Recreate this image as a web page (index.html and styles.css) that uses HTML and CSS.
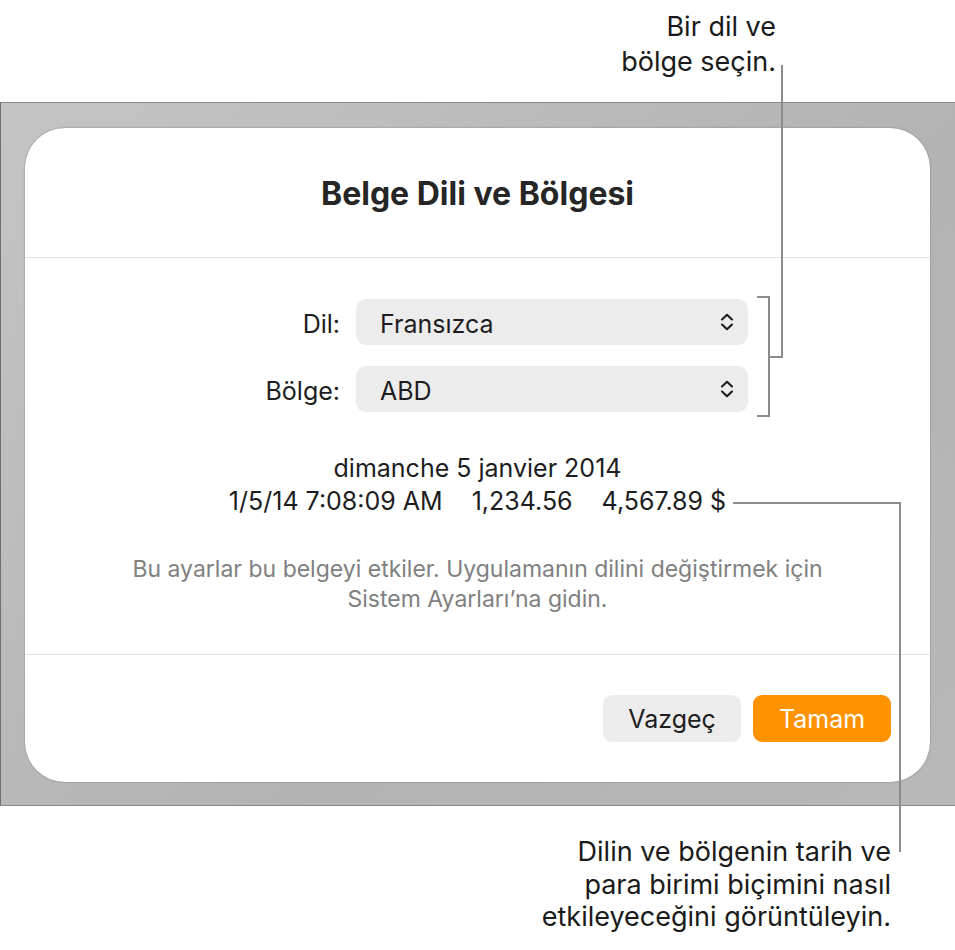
FILE: index.html
```html
<!DOCTYPE html>
<html lang="tr">
<head>
  <meta charset="UTF-8">
  <meta name="viewport" content="width=device-width, initial-scale=1">
  <title>Belge Dili ve Bölgesi</title>
  <link rel="stylesheet" href="styles.css">
</head>
<body>
  <div class="page">
    <p class="callout callout-top">Bir dil ve<br>bölge seçin.</p>

    <div class="frame">
      <div class="dialog">
        <h1 class="dialog-title">Belge Dili ve Bölgesi</h1>

        <div class="fields">
          <div class="field-row">
            <label class="field-label">Dil:</label>
            <div class="popup">
              <span>Fransızca</span>
              <svg class="chevrons" width="14" height="18" viewBox="0 0 14 18">
                <path d="M2 6.5 L7 1.8 L12 6.5 M2 11.5 L7 16.2 L12 11.5" fill="none" stroke="#1d1d1f" stroke-width="2.1" stroke-linecap="round" stroke-linejoin="round"/>
              </svg>
            </div>
          </div>
          <div class="field-row">
            <label class="field-label">Bölge:</label>
            <div class="popup">
              <span>ABD</span>
              <svg class="chevrons" width="14" height="18" viewBox="0 0 14 18">
                <path d="M2 6.5 L7 1.8 L12 6.5 M2 11.5 L7 16.2 L12 11.5" fill="none" stroke="#1d1d1f" stroke-width="2.1" stroke-linecap="round" stroke-linejoin="round"/>
              </svg>
            </div>
          </div>
        </div>

        <div class="sample">
          <div>dimanche 5 janvier 2014</div>
          <div class="sample-row">
            <span>1/5/14 7:08:09 AM</span>
            <span>1,234.56</span>
            <span>4,567.89 $</span>
          </div>
        </div>

        <p class="note">Bu ayarlar bu belgeyi etkiler. Uygulamanın dilini değiştirmek için<br>Sistem Ayarları’na gidin.</p>

        <div class="actions">
          <button class="btn btn-cancel">Vazgeç</button>
          <button class="btn btn-ok">Tamam</button>
        </div>
      </div>
    </div>

    <p class="callout callout-bottom">Dilin ve bölgenin tarih ve<br>para birimi biçimini nasıl<br>etkileyeceğini görüntüleyin.</p>

    <!-- leader lines -->
    <div class="line" style="left:781px; top:65px; width:2px; height:293px"></div>
    <div class="line" style="left:768px; top:356px; width:15px; height:2px"></div>
    <div class="line" style="left:768px; top:296px; width:2px; height:121px"></div>
    <div class="line" style="left:757px; top:296px; width:13px; height:2px"></div>
    <div class="line" style="left:757px; top:415px; width:13px; height:2px"></div>
    <div class="line" style="left:733px; top:502px; width:168px; height:2px"></div>
    <div class="line" style="left:899px; top:502px; width:2px; height:350px"></div>
  </div>
</body>
</html>
```

FILE: styles.css
```css
body {
  margin: 0;
  background: #fff;
  color: #1d1d1f;
  font-family: Inter, "Noto Sans", sans-serif;
}
.page {
  position: relative;
  width: 955px;
  height: 950px;
}

/* Callout text */
.callout {
  margin: 0;
  font-size: 27px;
  line-height: 35px;
  text-align: right;
  color: #1a1a1a;
}
.callout-top {
  height: 102px;
  box-sizing: border-box;
  padding: 9px 179px 0 0;
}
.callout-bottom {
  padding: 30px 64px 0 0;
  line-height: 32.5px;
}
.line {
  position: absolute;
  background: #8c8c8c;
}

/* Grey window backdrop */
.frame {
  height: 704px;
  box-sizing: border-box;
  padding: 25px 24px 0 24px;
  border: 1px solid #8a8a8a;
  border-left-color: #6f6f6f;
  border-right: none;
  background: linear-gradient(135deg, #c4c4c4 0%, #b3b3b3 60%, #b8b8b8 100%);
}

/* Dialog */
.dialog {
  width: 905px;
  height: 654px;
  background: #fff;
  border-radius: 40px;
  box-shadow: 0 0 2px rgba(0, 0, 0, 0.35);
  display: flex;
  flex-direction: column;
}
.dialog-title {
  margin: 0;
  height: 130px;
  box-sizing: border-box;
  padding-top: 46px;
  font-size: 32px;
  font-weight: 700;
  color: #262626;
  text-align: center;
  border-bottom: 1px solid #e4e4e4;
}

.fields {
  display: flex;
  flex-direction: column;
  gap: 21px;
  padding: 41px 0 0 195px;
}
.field-row {
  display: flex;
  align-items: center;
  gap: 16px;
}
.field-label {
  width: 120px;
  padding-top: 3px;
  text-align: right;
  font-size: 25px;
}
.popup {
  width: 392px;
  height: 46px;
  box-sizing: border-box;
  padding: 3px 14px 0 24px;
  display: flex;
  align-items: center;
  justify-content: space-between;
  background: #ececec;
  border-radius: 10px;
  font-size: 25px;
}
.chevrons {
  margin-top: -3px;
}

.sample {
  margin-top: 40px;
  text-align: center;
  font-size: 25px;
  line-height: 33px;
}
.sample-row {
  display: flex;
  justify-content: center;
  gap: 29px;
}

.note {
  margin: 36px 0 0;
  height: 100px;
  text-align: center;
  font-size: 23px;
  line-height: 30px;
  color: #808080;
  border-bottom: 1px solid #e4e4e4;
}

.actions {
  display: flex;
  justify-content: flex-end;
  gap: 12px;
  padding: 40px 39px 0 0;
}
.btn {
  width: 138px;
  height: 47px;
  border: none;
  border-radius: 9px;
  font-family: inherit;
  font-size: 25px;
  cursor: pointer;
}
.btn-cancel {
  background: #ececec;
  color: #1d1d1f;
}
.btn-ok {
  background: #ff9200;
  color: #fff;
}
```
